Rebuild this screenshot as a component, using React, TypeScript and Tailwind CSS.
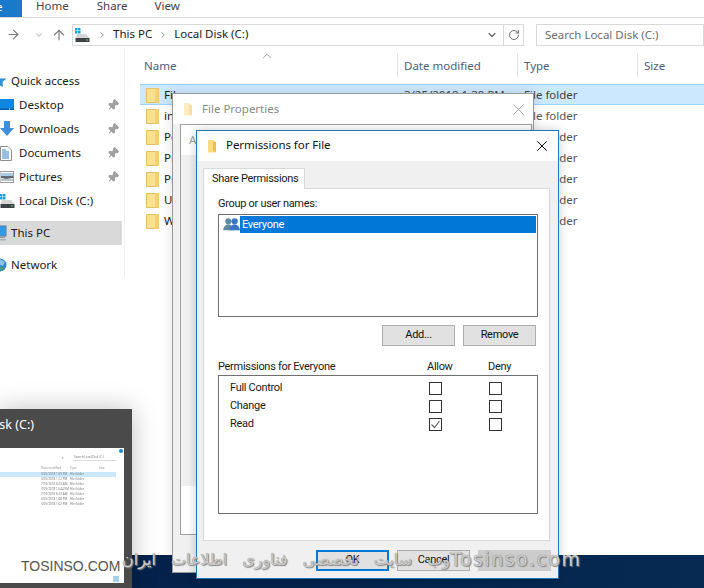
import { ArrowRight, ArrowUp, ChevronDown, ChevronRight, ChevronUp, Pin, RotateCw, X } from "lucide-react";

const folders = [
  { name: "File", date: "3/25/2018 1:39 PM", selected: true },
  { name: "inetpub", date: "3/25/2018 1:12 PM" },
  { name: "PerfLogs", date: "7/16/2016 6:23 AM" },
  { name: "Program Files", date: "3/25/2018 12:44 PM" },
  { name: "Program Files (x86)", date: "7/16/2016 6:23 AM" },
  { name: "Users", date: "3/25/2018 1:08 PM" },
  { name: "Windows", date: "3/25/2018 1:02 PM" },
];

const permissions = [
  { name: "Full Control", allow: false },
  { name: "Change", allow: false },
  { name: "Read", allow: true },
];

function FolderIcon({ faded }: { faded?: boolean }) {
  return (
    <svg width="13" height="17" viewBox="0 0 13 17" className={faded ? "shrink-0 opacity-60" : "shrink-0"}>
      <path d="M0.5 1.5 H8 L12.5 1.5 V15.5 H0.5 Z" fill="#fbe08f" stroke="#e2bf63" />
      <path d="M9 1.5 H12.5 V15.5 H9 Z" fill="#f7d26f" />
    </svg>
  );
}

function SmallFolder({ faded }: { faded?: boolean }) {
  return (
    <svg width="10" height="15" viewBox="0 0 10 15" className={faded ? "shrink-0 opacity-50" : "shrink-0"}>
      <path d="M1 1 H6 L7 2 V12 L9 13.5 H1 Z" fill="#fbdc84" />
      <path d="M6 2 L9 3 V13.5 L6 12 Z" fill="#eebf4d" />
    </svg>
  );
}

function DriveIcon() {
  return (
    <svg width="15" height="14" viewBox="0 0 15 14" className="shrink-0">
      <rect x="0" y="0" width="2.5" height="2.5" fill="#12a5d6" />
      <rect x="3" y="0" width="2.5" height="2.5" fill="#12a5d6" />
      <rect x="0" y="3" width="2.5" height="2.5" fill="#12a5d6" />
      <rect x="3" y="3" width="2.5" height="2.5" fill="#12a5d6" />
      <path d="M2 6 H11 L14.5 10 H0.5 Z" fill="#d5d5d5" />
      <rect x="0.5" y="10" width="14" height="4" fill="#3d4246" />
      <rect x="11" y="11.5" width="2" height="1" fill="#5fd26b" />
    </svg>
  );
}

function SideIcon({ kind }: { kind: string }) {
  if (kind === "star")
    return (
      <svg width="7" height="14" viewBox="0 0 7 14">
        <path d="M-3 0 L0 4.5 H6.5 L2.5 8 L3 13 L-3 10 Z" fill="#2f8fd8" />
      </svg>
    );
  if (kind === "desktop")
    return (
      <svg width="14" height="12" viewBox="0 0 14 12">
        <rect x="0" y="0" width="14" height="11" fill="#0f86df" />
        <rect x="0" y="9.5" width="14" height="1.5" fill="#0a5ca8" />
        <rect x="9" y="9.5" width="1" height="1" fill="#fff" />
      </svg>
    );
  if (kind === "downloads")
    return (
      <svg width="14" height="16" viewBox="0 0 14 16">
        <path d="M4 0 H10 V7 H14 L7 15 L0 7 H4 Z" fill="#3d8fdc" />
      </svg>
    );
  if (kind === "documents")
    return (
      <svg width="12" height="15" viewBox="0 0 12 15">
        <path d="M0.5 0.5 H8 L11.5 4 V14.5 H0.5 Z" fill="#fff" stroke="#8f8f8f" />
        <path d="M2 4 H6 M2 6 H9 M2 8 H9 M2 10 H9 M2 12 H9" stroke="#2f7fc9" />
      </svg>
    );
  if (kind === "pictures")
    return (
      <svg width="14" height="12" viewBox="0 0 14 12">
        <rect x="0" y="0.5" width="13.5" height="11" fill="#fff" stroke="#9a9a9a" />
        <rect x="1" y="2" width="12" height="3" fill="#a9cbe3" />
        <path d="M1 5 H13 V7 L6 8 L1 7 Z" fill="#5e6a70" />
        <rect x="1" y="8" width="12" height="2" fill="#b8c4ca" />
      </svg>
    );
  if (kind === "drive") return <DriveIcon />;
  if (kind === "pc")
    return (
      <svg width="7" height="16" viewBox="0 0 7 16">
        <rect x="-6" y="1" width="12" height="10" fill="#2f9be8" stroke="#5d7d96" />
        <rect x="-5" y="12" width="10" height="1" fill="#8f8f8f" />
        <rect x="-5" y="14" width="11" height="1.5" fill="#9fb0bd" />
      </svg>
    );
  return (
    <svg width="7" height="16" viewBox="0 0 7 16">
      <circle cx="0" cy="8" r="6.5" fill="#2c86c9" />
      <path d="M0 2 L5 5 L3 9 L0 8 Z" fill="#8cc4e8" />
      <path d="M0 10 L4 11 L1 14 Z" fill="#56a65a" />
    </svg>
  );
}

function Sidebar() {
  const quick = [
    { label: "Desktop", icon: "desktop" },
    { label: "Downloads", icon: "downloads" },
    { label: "Documents", icon: "documents" },
    { label: "Pictures", icon: "pictures" },
  ];
  return (
    <aside className="w-[125px] shrink-0 border-r border-[#f0f0f0] pr-[2px] pt-[21px] text-[11.5px] text-[#1a1a1a]">
      <div className="flex h-6 items-center gap-1">
        <SideIcon kind="star" />
        <span>Quick access</span>
      </div>
      {quick.map((item) => (
        <div key={item.label} className="flex h-6 items-center">
          <div className="flex w-[19px] shrink-0 justify-start">
            <SideIcon kind={item.icon} />
          </div>
          <span className="flex-1">{item.label}</span>
          <Pin size={12} className="mr-[3px] rotate-45 fill-[#a0a0a0] text-[#a0a0a0]" />
        </div>
      ))}
      <div className="flex h-6 items-center gap-1">
        <div className="w-[15px] shrink-0">
          <SideIcon kind="drive" />
        </div>
        <span>Local Disk (C:)</span>
      </div>
      <div className="mt-2 flex h-6 items-center gap-1 bg-[#d9d9d9]">
        <SideIcon kind="pc" />
        <span>This PC</span>
      </div>
      <div className="mt-2 flex h-6 items-center gap-1">
        <SideIcon kind="network" />
        <span>Network</span>
      </div>
    </aside>
  );
}

function FileList() {
  return (
    <div className="relative min-w-0 flex-1 pl-[15px] text-[11.5px]">
      <ChevronUp size={14} strokeWidth={1.25} className="absolute left-[135px] top-[1px] text-[#7a7a7a]" />
      <div className="grid h-9 grid-cols-[257px_120px_120px_1fr] pt-[5px] text-[#4c607a]">
        <div className="flex h-6 items-center pl-1 pt-[2px]">Name</div>
        <div className="flex h-6 items-center border-l border-[#e5e5e5] pl-[6px] pt-[2px]">Date modified</div>
        <div className="flex h-6 items-center border-l border-[#e5e5e5] pl-[6px] pt-[2px]">Type</div>
        <div className="flex h-6 items-center border-l border-[#e5e5e5] pl-[6px] pt-[2px]">Size</div>
      </div>
      {folders.map((f) => (
        <div
          key={f.name}
          className={
            f.selected
              ? "grid h-[21px] grid-cols-[257px_120px_120px_1fr] items-center border-y border-[#99d1ff] bg-[#cce8ff] pt-px text-[#444]"
              : "grid h-[21px] grid-cols-[257px_120px_120px_1fr] items-center pt-px text-[#555]"
          }
        >
          <div className="flex items-center gap-[5px] pl-[6px] text-[#1a1a1a]">
            <FolderIcon />
            <span>{f.name}</span>
          </div>
          <div className="pl-[7px]">{f.date}</div>
          <div className="pl-[7px]">File folder</div>
          <div />
        </div>
      ))}
    </div>
  );
}

function Explorer() {
  return (
    <div className="h-[555px] overflow-hidden bg-white font-['Noto_Sans',sans-serif]">
      <div className="flex h-[18px] items-end border-b border-[#dadada] text-[11.5px] text-[#444]">
        <div className="flex h-[17px] w-[22px] items-center overflow-hidden bg-[#1979ca] text-white">
          <span className="-ml-[4px] -mt-[3px]">e</span>
        </div>
        <div className="flex h-[17px] items-start">
          <span className="-mt-[3px] ml-[14px]">Home</span>
          <span className="-mt-[3px] ml-[28px]">Share</span>
          <span className="-mt-[3px] ml-[27px]">View</span>
        </div>
      </div>
      <div className="flex h-[30px] items-start pt-[6px]">
        <div className="flex h-[21px] w-[72px] shrink-0 items-center text-[#7a7a7a]">
          <ArrowRight size={15} strokeWidth={1.75} className="ml-[6px]" />
          <ChevronDown size={10} strokeWidth={2} className="ml-[13px] text-[#9a9a9a]" />
          <ArrowUp size={16} strokeWidth={1.75} className="ml-[7px]" />
        </div>
        <div className="flex h-[22px] w-[452px] shrink-0 items-center border border-[#d9d9d9] pl-[2px] text-[11.5px] text-[#1a1a1a]">
          <DriveIcon />
          <ChevronRight size={10} strokeWidth={2} className="ml-[7px] text-[#777]" />
          <span className="-mt-[2px] ml-[6px]">This PC</span>
          <ChevronRight size={10} strokeWidth={2} className="ml-[6px] text-[#777]" />
          <span className="-mt-[2px] ml-[6px]">Local Disk (C:)</span>
          <ChevronDown size={12} strokeWidth={2.5} className="ml-auto mr-[5px] text-[#666]" />
          <div className="flex h-full w-5 items-center justify-center border-l border-[#d9d9d9]">
            <RotateCw size={12} strokeWidth={2} className="text-[#6f6f6f]" />
          </div>
        </div>
        <div className="ml-[12px] flex h-[22px] flex-1 items-center border border-[#d9d9d9] pl-2 text-[11.5px] text-[#6d6d6d]">
          Search Local Disk (C:)
        </div>
      </div>
      <div className="flex">
        <Sidebar />
        <FileList />
      </div>
    </div>
  );
}

function PropertiesWindow() {
  return (
    <div className="absolute left-[172px] top-[93px] flex h-[480px] w-[362px] flex-col border border-[#9a9a9a] bg-[#f0f0f0] font-['Noto_Sans',sans-serif] text-[11.5px] shadow-[0_0_12px_rgba(0,0,0,0.12)]">
      <div className="flex h-[30px] shrink-0 items-center bg-white pl-[10px] pr-[5px] text-[#8a8a8a]">
        <SmallFolder faded />
        <span className="ml-[9px]">File Properties</span>
        <X size={19} strokeWidth={0.9} className="ml-auto text-[#8a8a8a]" />
      </div>
      <div className="ml-[7px] mr-px flex h-[411px] flex-col border border-[#a0a0a0] bg-[#f0f0f0]">
        <div className="flex h-[30px] shrink-0 items-center bg-white pl-2 text-[#a0a0a0]">A</div>
        <div className="flex-1" />
        <div className="h-[48px] shrink-0 bg-white" />
      </div>
    </div>
  );
}

function Checkbox({ checked }: { checked?: boolean }) {
  return (
    <div className="flex size-[13px] items-center justify-center border border-[#333] bg-white">
      {checked && (
        <svg width="11" height="11" viewBox="0 0 11 11">
          <path d="M1.5 5.5 L4.5 8.5 L9.5 2" fill="none" stroke="#666" strokeWidth="1.2" />
        </svg>
      )}
    </div>
  );
}

function DialogButton({ label, tone }: { label: string; tone?: "default" | "disabled" }) {
  const cls =
    tone === "default"
      ? "border-2 border-[#0078d7] bg-[#e1e1e1]"
      : tone === "disabled"
        ? "border border-[#cccccc] bg-[#cccccc]"
        : "border border-[#adadad] bg-[#e1e1e1]";
  return <div className={`flex h-[21px] w-[73px] items-center justify-center text-[#111] ${cls}`}>{label}</div>;
}

function PermissionsDialog() {
  return (
    <div className="absolute left-[196px] top-[130px] flex h-[449px] w-[363px] flex-col border border-[#1f78b8] bg-[#f0f0f0] text-[11px] tracking-[-0.3px] text-[#1a1a1a] shadow-[0_0_10px_rgba(0,0,0,0.2)]">
      <div className="flex h-[30px] shrink-0 items-center bg-white pl-[10px] pr-[7px] font-['Noto_Sans',sans-serif] text-[11.5px] tracking-[-0.05px] text-[#111]">
        <SmallFolder />
        <span className="-mt-[2px] ml-[9px]">Permissions for File</span>
        <X size={18} strokeWidth={1.25} className="ml-auto text-black" />
      </div>
      <div className="flex-1 px-[6px] pt-[7px] font-['Roboto',sans-serif]">
        <div className="relative z-10 -mb-px flex h-[21px] w-[102px] items-center whitespace-nowrap border border-b-0 border-[#d9d9d9] bg-white pl-2">
          Share Permissions
        </div>
        <div className="h-[353px] w-[347px] border border-[#d9d9d9] bg-white px-[14px] pt-[7px]">
          <div className="h-[18px] leading-[16px]">Group or user names:</div>
          <div className="h-[103px] w-[320px] border border-[#707070] p-px">
            <div className="flex h-[17px] items-center">
              <svg width="17" height="15" viewBox="0 0 19 15" className="ml-[3px] shrink-0">
                <circle cx="6" cy="4" r="3.5" fill="#5f8aa0" />
                <path d="M0 14 Q1 7.5 6 7.5 Q11 7.5 12 14 Z" fill="#5f8aa0" />
                <circle cx="13" cy="4" r="3.5" fill="#3a76c4" />
                <path d="M7 14 Q8 7.5 13 7.5 Q18 7.5 19 14 Z" fill="#3a76c4" />
              </svg>
              <div className="flex h-full flex-1 items-center bg-[#0078d7] pl-[2px] pt-[2px] text-white">Everyone</div>
            </div>
          </div>
          <div className="mt-[8px] flex w-[318px] justify-end gap-2">
            <DialogButton label="Add..." />
            <DialogButton label="Remove" />
          </div>
          <div className="mt-[13px] flex h-[16px] w-[320px] items-center">
            <span className="w-[209px]">Permissions for Everyone</span>
            <span className="w-[61px]">Allow</span>
            <span>Deny</span>
          </div>
          <div className="h-[139px] w-[320px] border border-[#707070] pt-[3px]">
            {permissions.map((p) => (
              <div key={p.name} className="flex h-[18px] items-center">
                <span className="ml-[11px] w-[199px] pt-px">{p.name}</span>
                <Checkbox checked={p.allow} />
                <div className="ml-[47px]">
                  <Checkbox />
                </div>
              </div>
            ))}
          </div>
        </div>
        <div className="mt-[9px] flex justify-end gap-2 pr-[1px]">
          <DialogButton label="OK" tone="default" />
          <DialogButton label="Cancel" />
          <DialogButton label="" tone="disabled" />
        </div>
      </div>
    </div>
  );
}

function TaskbarPreview() {
  return (
    <div className="absolute left-0 top-[409px] flex h-[179px] w-[132px] flex-col bg-[#4b4a4a] font-['Noto_Sans',sans-serif] shadow-[0_0_24px_rgba(0,0,0,0.25)]">
      <div className="flex h-[39px] shrink-0 items-start justify-end pr-[98px] pt-[7px] text-[12.5px] text-white">
        <span className="whitespace-nowrap">isk (C:)</span>
      </div>
      <div className="relative h-[135px] w-[124px] bg-white">
        <div className="absolute right-[1px] top-[1px] size-[4px] rounded-full bg-[#1f86c9]" />
        <div className="text-[3px] text-[#777] blur-[0.3px]">
          <div className="flex items-center pt-[7px]">
            <span className="ml-[62px]">▾</span>
            <span className="ml-[9px] w-[44px] whitespace-nowrap border-b border-[#ddd] pl-px">Search Local Disk (C:)</span>
          </div>
          <div className="mt-[5px] grid grid-cols-[29px_29px_29px] pl-[41px] opacity-80">
            <span className="whitespace-nowrap">Date modified</span>
            <span>Type</span>
            <span>Size</span>
          </div>
          {folders.map((f) => (
            <div
              key={f.name}
              className={
                f.selected
                  ? "mt-[2px] grid h-[5px] w-[116px] grid-cols-[29px_29px] items-center bg-[#cce8ff] pl-[41px]"
                  : "grid h-[5px] w-[116px] grid-cols-[29px_29px] items-center pl-[41px]"
              }
            >
              <span className="whitespace-nowrap">{f.date}</span>
              <span>File folder</span>
            </div>
          ))}
        </div>
        <div className="absolute bottom-[1px] right-[5px] size-[6px] bg-[#a9cfe6]" />
        <div className="absolute bottom-[10px] left-[21px] whitespace-nowrap font-['Liberation_Sans',sans-serif] text-[14px] leading-none text-[#555]">
          TOSINSO.COM
        </div>
      </div>
    </div>
  );
}

function Watermark() {
  return (
    <div
      dir="rtl"
      className="absolute left-[124px] top-[547px] h-6 w-[456px] whitespace-nowrap pr-[130px] text-[#cacaca] [text-shadow:0_0_1px_#777,1px_1px_1px_#888]"
    >
      <span className="font-['DejaVu_Sans',sans-serif] text-[16px] leading-[24px] [word-spacing:10px]">
        وب سایت تخصصی فناوری اطلاعات ایران
      </span>
      <span dir="ltr" className="absolute left-[326px] top-0 font-['DejaVu_Sans',sans-serif] text-[19px] leading-[24px] tracking-[1.5px]">
        Tosinso.com
      </span>
    </div>
  );
}

export default function App() {
  return (
    <div className="relative h-[588px] w-[704px] overflow-hidden bg-[#03224a]">
      <Explorer />
      <div className="h-[33px] bg-[linear-gradient(90deg,#03204a,#062a52)]" />
      <PropertiesWindow />
      <PermissionsDialog />
      <TaskbarPreview />
      <Watermark />
    </div>
  );
}
